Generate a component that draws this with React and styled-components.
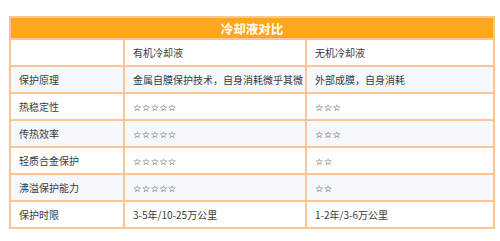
import styled, { createGlobalStyle } from 'styled-components'

const GlobalStyle = createGlobalStyle`
  body {
    margin: 0;
    background: #ffffff;
    font-family: "Noto Sans CJK SC", "Noto Sans", sans-serif;
  }
`

const Wrap = styled.div`
  padding: 16px 5px 0 9px;
`

const Table = styled.table`
  width: 486px;
  border-collapse: collapse;
  border: 2px solid #fdc593;
  table-layout: fixed;
`

const TitleCell = styled.th`
  background: #ffa61c;
  color: #ffffff;
  font-size: 12.5px;
  font-weight: 700;
  height: 20px;
  padding: 0;
  text-align: center;
  border: 2px solid #fdc593;
`

const Row = styled.tr`
  background: ${({ $alt }) => ($alt ? '#f5f9fe' : '#ffffff')};
`

const Cell = styled.td`
  border: 2px solid #fdc593;
  height: 25px;
  padding: 0 8px;
  font-size: 10px;
  color: #3a3a3a;
  white-space: nowrap;
`

const Stars = styled.span`
  font-family: "DejaVu Sans", sans-serif;
  font-size: 9.5px;
  color: #2a2a2a;
  letter-spacing: 0.2px;
`

const rows = [
  ['保护原理', '金属自膜保护技术，自身消耗微乎其微', '外部成膜，自身消耗'],
  ['热稳定性', 5, 3],
  ['传热效率', 5, 3],
  ['轻质合金保护', 5, 2],
  ['沸溢保护能力', 5, 2],
  ['保护时限', '3-5年/10-25万公里', '1-2年/3-6万公里'],
]

function Value({ v }) {
  if (typeof v === 'number') return <Stars>{'☆'.repeat(v)}</Stars>
  return v
}

export default function App() {
  return (
    <>
      <GlobalStyle />
      <Wrap>
        <Table>
          <colgroup>
            <col style={{ width: 114 }} />
            <col style={{ width: 182 }} />
            <col />
          </colgroup>
          <thead>
            <tr>
              <TitleCell colSpan={3}>冷却液对比</TitleCell>
            </tr>
          </thead>
          <tbody>
            <Row>
              <Cell></Cell>
              <Cell>有机冷却液</Cell>
              <Cell>无机冷却液</Cell>
            </Row>
            {rows.map((r, i) => (
              <Row key={r[0]} $alt={i % 2 === 0}>
                <Cell>{r[0]}</Cell>
                <Cell><Value v={r[1]} /></Cell>
                <Cell><Value v={r[2]} /></Cell>
              </Row>
            ))}
          </tbody>
        </Table>
      </Wrap>
    </>
  )
}
